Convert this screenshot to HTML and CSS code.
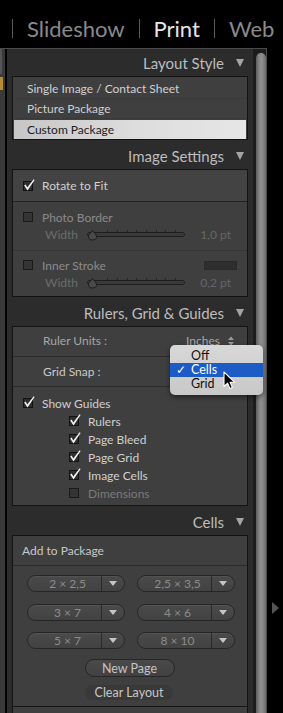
FILE: index.html
```html
<!DOCTYPE html>
<html lang="en">
<head>
<meta charset="utf-8">
<title>Print – Layout panel</title>
<link rel="stylesheet" href="styles.css">
</head>
<body>
<div class="app">
  <nav class="topnav">
    <span class="sep"></span><span class="tab">Slideshow</span><span class="sep"></span><span class="tab active">Print</span><span class="sep"></span><span class="tab">Web</span>
  </nav>
  <div class="main">
    <div class="frame">
      <div class="strip"><div class="strip-top"></div><div class="strip-mark"></div></div>
      <div class="panel">

        <section class="sec">
          <header class="sec-head"><span>Layout Style</span><i class="tri"></i></header>
          <div class="box list">
            <div class="item">Single Image / Contact Sheet</div>
            <div class="item">Picture Package</div>
            <div class="item selected">Custom Package</div>
          </div>
        </section>

        <section class="sec">
          <header class="sec-head"><span>Image Settings</span><i class="tri"></i></header>
          <div class="box">
            <div class="row rotate">
              <svg class="cb" viewBox="0 0 14 14" width="14" height="14"><rect x="1.5" y="2.5" width="9" height="9" fill="#2e2e2e" stroke="#121212"/><path d="M2.2 6.4 L3.6 5.6 L5.3 8.6 L11.6 0.2 L12.6 1 L5.5 11.4 Z" fill="#f2f2f2"/></svg>
              <span>Rotate to Fit</span>
            </div>
            <div class="block photo">
              <div class="row dim">
                <svg class="cb" viewBox="0 0 14 14" width="14" height="14"><rect x="1.5" y="2.5" width="9" height="9" fill="#343434" stroke="#1a1a1a"/></svg>
                <span>Photo Border</span>
              </div>
              <div class="slider-row">
                <span class="slabel">Width</span>
                <svg class="slider" width="101" height="13" viewBox="0 0 101 13"><path d="M21.5 2v2M31.5 2v2M41.5 2v2M50.5 2v2M60.5 2v2M70.5 2v2M79.5 2v2M89.5 2v2" stroke="#262626"/><rect x="1.5" y="4.5" width="97" height="4" rx="2" fill="#3a3a3a" stroke="#1e1e1e"/><path d="M6.5 2.5 C7.5 4.5 10.5 6 10.5 8.7 C10.5 11 8.5 12 6.5 12 C4.5 12 2.5 11 2.5 8.7 C2.5 6 5.5 4.5 6.5 2.5 Z" fill="#4a4a4a" stroke="#1c1c1c"/></svg>
                <span class="sval">1,0 pt</span>
              </div>
            </div>
            <div class="block inner">
              <div class="row dim">
                <svg class="cb" viewBox="0 0 14 14" width="14" height="14"><rect x="1.5" y="2.5" width="9" height="9" fill="#343434" stroke="#1a1a1a"/></svg>
                <span class="grow">Inner Stroke</span>
                <span class="swatch"></span>
              </div>
              <div class="slider-row">
                <span class="slabel">Width</span>
                <svg class="slider" width="101" height="13" viewBox="0 0 101 13"><path d="M21.5 2v2M31.5 2v2M41.5 2v2M50.5 2v2M60.5 2v2M70.5 2v2M79.5 2v2M89.5 2v2" stroke="#262626"/><rect x="1.5" y="4.5" width="97" height="4" rx="2" fill="#3a3a3a" stroke="#1e1e1e"/><path d="M6.5 2.5 C7.5 4.5 10.5 6 10.5 8.7 C10.5 11 8.5 12 6.5 12 C4.5 12 2.5 11 2.5 8.7 C2.5 6 5.5 4.5 6.5 2.5 Z" fill="#4a4a4a" stroke="#1c1c1c"/></svg>
                <span class="sval">0,2 pt</span>
              </div>
            </div>
          </div>
        </section>

        <section class="sec">
          <header class="sec-head"><span>Rulers, Grid &amp; Guides</span><i class="tri"></i></header>
          <div class="box">
            <div class="prow units">
              <span class="grow">Ruler Units :</span>
              <span class="pval">Inches<svg class="updown" width="6" height="10" viewBox="0 0 6 10"><path d="M0 4 L3 0.5 L6 4 Z M0 6 L3 9.5 L6 6 Z" fill="#9a9a9a"/></svg></span>
            </div>
            <div class="prow snap">
              <span class="grow">Grid Snap :</span>
            </div>
            <div class="guides">
              <div class="grow-row">
                <svg class="cb" viewBox="0 0 14 14" width="14" height="14"><rect x="1.5" y="2.5" width="9" height="9" fill="#2e2e2e" stroke="#121212"/><path d="M2.2 6.4 L3.6 5.6 L5.3 8.6 L11.6 0.2 L12.6 1 L5.5 11.4 Z" fill="#f2f2f2"/></svg>
                <span>Show Guides</span>
              </div>
              <div class="grow-row sub">
                <svg class="cb" viewBox="0 0 14 14" width="14" height="14"><rect x="1.5" y="2.5" width="9" height="9" fill="#2e2e2e" stroke="#121212"/><path d="M2.2 6.4 L3.6 5.6 L5.3 8.6 L11.6 0.2 L12.6 1 L5.5 11.4 Z" fill="#f2f2f2"/></svg>
                <span>Rulers</span>
              </div>
              <div class="grow-row sub">
                <svg class="cb" viewBox="0 0 14 14" width="14" height="14"><rect x="1.5" y="2.5" width="9" height="9" fill="#2e2e2e" stroke="#121212"/><path d="M2.2 6.4 L3.6 5.6 L5.3 8.6 L11.6 0.2 L12.6 1 L5.5 11.4 Z" fill="#f2f2f2"/></svg>
                <span>Page Bleed</span>
              </div>
              <div class="grow-row sub">
                <svg class="cb" viewBox="0 0 14 14" width="14" height="14"><rect x="1.5" y="2.5" width="9" height="9" fill="#2e2e2e" stroke="#121212"/><path d="M2.2 6.4 L3.6 5.6 L5.3 8.6 L11.6 0.2 L12.6 1 L5.5 11.4 Z" fill="#f2f2f2"/></svg>
                <span>Page Grid</span>
              </div>
              <div class="grow-row sub">
                <svg class="cb" viewBox="0 0 14 14" width="14" height="14"><rect x="1.5" y="2.5" width="9" height="9" fill="#2e2e2e" stroke="#121212"/><path d="M2.2 6.4 L3.6 5.6 L5.3 8.6 L11.6 0.2 L12.6 1 L5.5 11.4 Z" fill="#f2f2f2"/></svg>
                <span>Image Cells</span>
              </div>
              <div class="grow-row sub off">
                <svg class="cb" viewBox="0 0 14 14" width="14" height="14"><rect x="1.5" y="2.5" width="9" height="9" fill="#343434" stroke="#1a1a1a"/></svg>
                <span>Dimensions</span>
              </div>
            </div>
          </div>
        </section>

        <section class="sec">
          <header class="sec-head"><span>Cells</span><i class="tri"></i></header>
          <div class="box cells">
            <div class="prow add">Add to Package</div>
            <div class="cell-grid">
              <div class="pbtn"><span class="lbl">2 × 2,5</span><span class="arr"></span></div>
              <div class="pbtn"><span class="lbl">2,5 × 3,5</span><span class="arr"></span></div>
              <div class="pbtn"><span class="lbl">3 × 7</span><span class="arr"></span></div>
              <div class="pbtn"><span class="lbl">4 × 6</span><span class="arr"></span></div>
              <div class="pbtn"><span class="lbl">5 × 7</span><span class="arr"></span></div>
              <div class="pbtn"><span class="lbl">8 × 10</span><span class="arr"></span></div>
            </div>
            <div class="actions">
              <div class="btn new">New Page</div>
              <div class="btn clear">Clear Layout</div>
            </div>
            <div class="subsep"></div>
          </div>
        </section>

      </div>
      <div class="scroll"><div class="thumb"></div></div>
    </div>
    <div class="gutter"><i class="gtri"></i></div>
  </div>

  <div class="menu">
    <div class="mitem">Off</div>
    <div class="mitem on"><span class="check">✓</span>Cells</div>
    <div class="mitem">Grid</div>
  </div>
  <svg class="cursor" width="13" height="19" viewBox="0 0 13 19"><path d="M1 1 L1 15.5 L4.6 12.2 L7 17.6 L9.4 16.6 L7.1 11.3 L11.8 11.3 Z" fill="#000" stroke="#fff" stroke-width="1.1" stroke-linejoin="round"/></svg>
</div>
</body>
</html>
```

FILE: styles.css
```css
* { box-sizing: border-box; margin: 0; padding: 0; }
html, body { background: #000; }
body {
  width: 283px;
  height: 713px;
  overflow: hidden;
  font-family: Lato, "Open Sans", sans-serif;
}
.app {
  position: relative;
  width: 283px;
  height: 713px;
  display: flex;
  flex-direction: column;
}

/* top module picker */
.topnav {
  height: 48px;
  flex: none;
  display: flex;
  align-items: center;
  gap: 14px;
  padding: 9px 0 0 12px;
  white-space: nowrap;
  overflow: hidden;
  font-size: 22px;
  color: #8a8a8a;
}
.topnav .sep { width: 1px; height: 19px; background: #5a5a5a; flex: none; }
.topnav .active { color: #e6e6e6; }

.main { flex: 1; display: flex; min-height: 0; }
.frame {
  width: 267px;
  flex: none;
  border-top: 1px solid #4a4a4a;
  border-right: 1px solid #4c4c4c;
  display: flex;
}
.strip {
  width: 7px;
  flex: none;
  border-right: 2px solid #000;
  background: #3a3a3a;
  display: flex;
  flex-direction: column;
}
.strip-top { height: 25px; border-left: 2px solid #555; }
.strip-mark { width: 3px; height: 13px; margin-top: 3px; background: #b98a34; }
.panel {
  width: 246px;
  flex: none;
  background: #2c2c2c;
  padding: 0 5px;
}
.scroll { width: 13px; flex: none; background: #1c1c1c; padding: 4px 0 0 3px; }
.thumb {
  height: 100%;
  border-radius: 5px 5px 0 0;
  background: linear-gradient(90deg, #5c5c5c, #888 35%, #8e8e8e 60%, #6a6a6a);
}
.gutter { flex: 1; padding: 554px 0 0 5px; }
.gtri {
  display: block;
  width: 0; height: 0;
  border-top: 6px solid transparent;
  border-bottom: 6px solid transparent;
  border-left: 7px solid #555;
}

/* sections */
.sec-head {
  height: 27px;
  display: flex;
  justify-content: flex-end;
  align-items: center;
  gap: 12px;
  padding: 1px 4px 0 0;
  font-size: 15px;
  color: #bdbdbd;
}
.tri {
  width: 0; height: 0;
  border-left: 4.5px solid transparent;
  border-right: 4.5px solid transparent;
  border-top: 8px solid #a4a4a4;
}
.box {
  background: #3f3f3f;
  border: 1px solid #131313;
  margin-bottom: 2px;
  font-size: 12px;
  color: #d0d0d0;
}

/* layout style list */
.list { padding: 2px 1px 0; }
.item { height: 20px; display: flex; align-items: center; padding-left: 13px; border-bottom: 1px solid #3a3a3a; }
.item.selected {
  height: 19px;
  margin-top: 1px;
  border-bottom: 0;
  background: linear-gradient(90deg, #c6c6c6, #dcdcdc 50%, #e6e6e6);
  color: #1c1c1c;
}

/* rows with checkboxes */
.cb { flex: none; display: block; }
.row { display: flex; align-items: center; gap: 6px; padding-left: 9px; }
.rotate { height: 32px; background: #434343; border-bottom: 1px solid #232323; }
.block { border-bottom: 1px solid #353535; }
.photo { padding: 7px 0 7px; }
.inner { padding: 6px 0 5px; border-bottom: 0; }
.block .row { height: 16px; }
.dim { color: #8a8a8a; }
.grow { flex: 1; }
.swatch {
  width: 33px; height: 9px;
  margin-right: 10px;
  background: #2e2e2e;
  border: 1px solid #2a2a2a;
}
.slider-row { height: 18px; display: flex; align-items: center; padding-left: 32px; color: #6c6c6c; }
.slabel { width: 41px; }
.slider { display: block; flex: none; }
.sval { flex: 1; text-align: right; padding-right: 16px; color: #666; }

/* rulers */
.prow { display: flex; align-items: center; height: 30px; padding-left: 30px; border-bottom: 1px solid #2b2b2b; }
.units { color: #a6a6a6; padding-bottom: 2px; }
.snap { color: #cacaca; }
.pval { width: 61px; display: flex; align-items: center; gap: 8px; line-height: 11px; }
.updown { display: block; }
.guides { padding: 7px 0 3px; }
.grow-row { height: 18px; display: flex; align-items: center; gap: 6px; padding-left: 9px; }
.grow-row.sub { padding-left: 55px; }
.grow-row.off { color: #7a7a7a; }

/* cells */
.cells { margin-bottom: 0; height: 179px; }
.add { padding-left: 9px; color: #c8c8c8; }
.cell-grid {
  display: grid;
  grid-template-columns: 98px 98px;
  column-gap: 12px;
  row-gap: 11.5px;
  padding: 9px 0 0 14px;
}
.pbtn {
  height: 17px;
  display: flex;
  border: 1px solid #262626;
  border-radius: 9px;
  background: linear-gradient(#4a4a4a, #424242);
  box-shadow: inset 0 1px 0 rgba(255,255,255,.05);
}
.lbl { flex: 1; text-align: center; padding-left: 6px; line-height: 15px; color: #8c8c8c; }
.arr {
  width: 23px;
  border-left: 1px solid #2a2a2a;
  display: flex;
  align-items: center;
  justify-content: center;
}
.arr::after {
  content: "";
  width: 0; height: 0;
  border-left: 4px solid transparent;
  border-right: 4px solid transparent;
  border-top: 5px solid #c4c4c4;
}
.actions { display: flex; flex-direction: column; align-items: center; padding: 10px 0 0 14px; gap: 8px; }
.btn { height: 18px; display: flex; align-items: center; justify-content: center; border-radius: 9px; font-size: 12.5px; }
.btn.new {
  width: 90px;
  margin-left: -15px;
  border: 1px solid #262626;
  background: linear-gradient(#4a4a4a, #424242);
  color: #c4c4c4;
}
.btn.clear { width: 88px; height: 15px; margin-left: -16px; background: #393939; color: #c8c8c8; }
.subsep { height: 1px; margin-top: 6px; background: #151515; }

/* overlay menu */
.menu {
  position: absolute;
  left: 170px;
  top: 345px;
  width: 93px;
  height: 50px;
  padding-top: 4px;
  border-radius: 5px;
  background: linear-gradient(#d8d8d8, #c8c8c8);
  box-shadow: 0 2px 5px rgba(0,0,0,.5);
  font-size: 12.5px;
  color: #111;
}
.mitem { height: 14px; line-height: 14px; padding-left: 21px; position: relative; }
.mitem.on { background: #1d5bc6; color: #fff; }
.check { position: absolute; left: 6px; top: 0; font-size: 12px; }
.cursor { position: absolute; left: 223px; top: 371px; }
```
